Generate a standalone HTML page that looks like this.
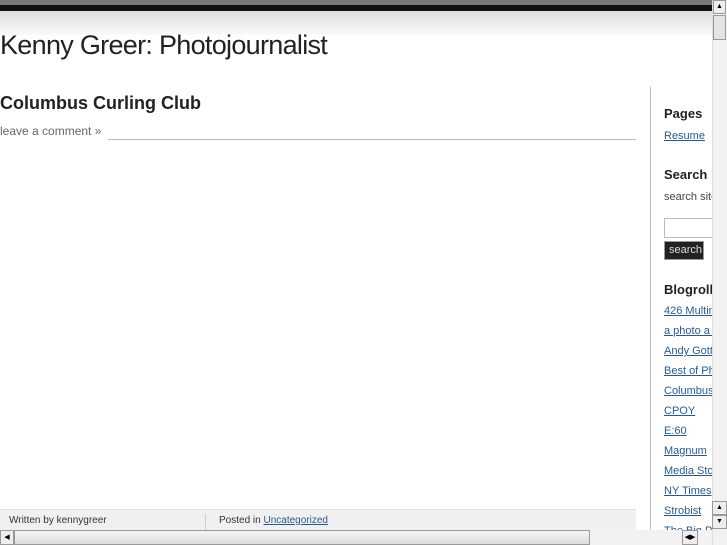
<!DOCTYPE html>
<html><head><style>
body{margin:0;width:727px;height:545px;overflow:hidden;position:relative;background:#fff;font-family:"Liberation Sans",sans-serif;}
.a{position:absolute;}
a{color:#2a5a8a;text-decoration:underline;}
.sb{left:664px;width:48px;overflow:hidden;white-space:nowrap;}
.h{font-size:13px;font-weight:bold;color:#222;}
.l{font-size:11px;}
</style></head><body>
<div class="a" style="left:0;top:0;width:712px;height:5px;background:#7a7a7a"></div>
<div class="a" style="left:0;top:5px;width:712px;height:6px;background:#111"></div>
<div class="a" style="left:0;top:11px;width:712px;height:24px;background:linear-gradient(#dcdcdc,#fafafa)"></div>
<div class="a" style="left:0;top:30px;font-size:27px;color:#222;letter-spacing:-0.7px">Kenny Greer: Photojournalist</div>
<div class="a" style="left:0;top:93px;font-size:18px;font-weight:bold;color:#222">Columbus Curling Club</div>
<div class="a" style="left:0;top:124px;font-size:12px;color:#666">leave a comment »</div>
<div class="a" style="left:108px;top:139px;width:528px;height:1px;background:#bbb"></div>
<div class="a" style="left:650px;top:87px;width:1px;height:458px;background:#bbb"></div>
<div class="a sb h" style="top:106px">Pages</div>
<div class="a sb l" style="top:130px"><a>Resume</a></div>
<div class="a sb h" style="top:167px">Search</div>
<div class="a sb l" style="top:191px;color:#444">search site</div>
<div class="a" style="left:664px;top:218px;width:60px;height:20px;border:1px solid #bbb;box-sizing:border-box"></div>
<div class="a" style="left:664px;top:241px;background:#222;color:#ddd;font-size:11px;width:40px;height:19px;line-height:17px;padding-left:4px;box-sizing:border-box;border:1px solid #999">search</div>
<div class="a sb h" style="top:282px">Blogroll</div>
<div class="a sb l" style="top:301px;line-height:20px">
<a style="display:block">426 Multimedia</a><a style="display:block">a photo a day</a><a style="display:block">Andy Gottesman</a><a style="display:block">Best of Photojournalism</a><a style="display:block">Columbus</a><a style="display:block">CPOY</a><a style="display:block">E:60</a><a style="display:block">Magnum</a><a style="display:block">Media Storm</a><a style="display:block">NY Times</a><a style="display:block">Strobist</a><a style="display:block">The Big Picture</a>
</div>
<div class="a" style="left:0;top:509px;width:636px;height:21px;background:#f0f0f0;border-top:1px solid #ddd"></div>
<div class="a" style="left:9px;top:515px;font-size:10px;color:#333">Written by kennygreer</div>
<div class="a" style="left:205px;top:514px;width:1px;height:16px;background:#ccc"></div>
<div class="a" style="left:219px;top:515px;font-size:10px;color:#333">Posted in <a>Uncategorized</a></div>
<div class="a" style="left:712px;top:0;width:15px;height:545px;background:#f2f2f2;border-left:1px solid #ddd"></div>
<div class="a" style="left:713px;top:0;width:13px;height:14px;background:#eee;border:1px solid #999;box-sizing:border-box;font-size:7px;text-align:center;line-height:12px">▲</div>
<div class="a" style="left:713px;top:15px;width:13px;height:25px;background:#e4e4e4;border:1px solid #999;box-sizing:border-box"></div>
<div class="a" style="left:712px;top:501px;width:15px;height:14px;background:#eee;border:1px solid #999;box-sizing:border-box;font-size:7px;text-align:center;line-height:12px">▲</div>
<div class="a" style="left:712px;top:515px;width:15px;height:14px;background:#eee;border:1px solid #999;box-sizing:border-box;font-size:7px;text-align:center;line-height:12px">▼</div>
<div class="a" style="left:0;top:530px;width:712px;height:15px;background:#f2f2f2"></div>
<div class="a" style="left:0;top:530px;width:14px;height:15px;background:#eee;border:1px solid #999;box-sizing:border-box;font-size:7px;line-height:13px;text-align:center">◀</div>
<div class="a" style="left:14px;top:530px;width:576px;height:15px;background:linear-gradient(#f4f4f4,#ddd);border:1px solid #999;box-sizing:border-box"></div>
<div class="a" style="left:682px;top:530px;width:16px;height:15px;background:#eee;border:1px solid #999;box-sizing:border-box;font-size:7px;line-height:13px;text-align:center">◀▶</div>
</body></html>
